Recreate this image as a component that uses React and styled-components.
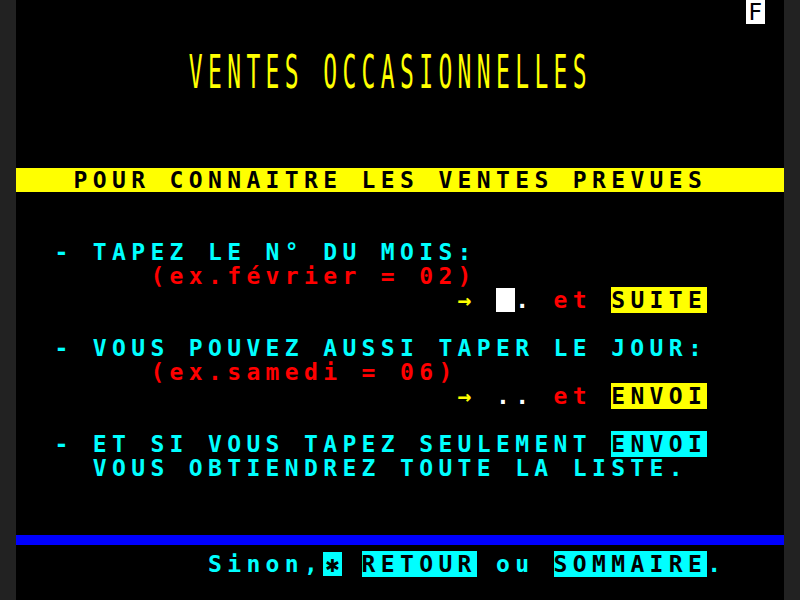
import React from "react";
import styled, { createGlobalStyle } from "styled-components";

const CELL = 19.2;
const ROW = 24;

const YELLOW = "#ffff00";
const CYAN = "#00ffff";
const RED = "#ff0000";
const WHITE = "#ffffff";
const BLUE = "#0000ff";

const GlobalStyle = createGlobalStyle`
  html, body {
    margin: 0;
    padding: 0;
    background: #222222;
  }
`;

const Screen = styled.div`
  width: ${CELL * 40}px;
  height: ${ROW * 25}px;
  margin: 0 auto;
  background: #000000;
  overflow: hidden;
  font-family: "DejaVu Sans Mono", "Liberation Mono", monospace;
  font-size: 23px;
  font-weight: bold;
  letter-spacing: ${CELL - 23 * 0.6021}px;
`;

const Row = styled.div`
  height: ${ROW}px;
  line-height: ${ROW}px;
  white-space: pre;
  background: ${(p) => p.$band || "transparent"};
`;

const Gap = styled.div`
  height: ${(p) => p.$rows * ROW}px;
`;

const DoubleRow = styled.div`
  height: ${ROW * 2}px;
  padding-top: ${ROW}px;
  box-sizing: border-box;
  line-height: ${ROW}px;
  white-space: pre;
`;

const Tall = styled.span`
  display: inline-block;
  transform: scaleY(2);
  transform-origin: bottom;
  font-weight: normal;
  color: ${(p) => p.$fg};
`;

const Txt = styled.span`
  color: ${(p) => p.$fg || CYAN};
  background: ${(p) => p.$bg || "transparent"};
`;

const Cell = styled.span`
  display: inline-block;
  width: ${CELL}px;
  height: ${ROW}px;
  vertical-align: top;
  text-align: center;
  letter-spacing: 0;
  color: ${(p) => p.$fg || "#000"};
  background: ${(p) => p.$bg || "transparent"};
`;

const StatusF = styled(Cell)`
  font-weight: normal;
`;

const Divider = styled.div`
  height: ${ROW}px;
  padding-top: 7px;
  box-sizing: border-box;
`;

const BlueBar = styled.div`
  height: 10px;
  background: ${BLUE};
`;

const sp = (n) => " ".repeat(n);

export default function App() {
  return (
    <>
      <GlobalStyle />
      <Screen>
        <Row>
          {sp(38)}
          <StatusF $bg={WHITE}>F</StatusF>
        </Row>
        <Gap $rows={1} />
        <DoubleRow>
          {sp(9)}
          <Tall $fg={YELLOW}>VENTES OCCASIONNELLES</Tall>
        </DoubleRow>
        <Gap $rows={3} />
        <Row $band={YELLOW}>
          <Txt $fg="#000">{sp(3)}POUR CONNAITRE LES VENTES PREVUES</Txt>
        </Row>
        <Gap $rows={2} />
        <Row>
          <Txt>{sp(2)}- TAPEZ LE N° DU MOIS:</Txt>
        </Row>
        <Row>
          <Txt $fg={RED}>{sp(7)}(ex.février = 02)</Txt>
        </Row>
        <Row>
          {sp(23)}
          <Txt $fg={YELLOW}>→ </Txt>
          <Cell $bg={WHITE} />
          <Txt $fg={WHITE}>. </Txt>
          <Txt $fg={RED}>et </Txt>
          <Txt $fg="#000" $bg={YELLOW}>SUITE</Txt>
        </Row>
        <Gap $rows={1} />
        <Row>
          <Txt>{sp(2)}- VOUS POUVEZ AUSSI TAPER LE JOUR:</Txt>
        </Row>
        <Row>
          <Txt $fg={RED}>{sp(7)}(ex.samedi = 06)</Txt>
        </Row>
        <Row>
          {sp(23)}
          <Txt $fg={YELLOW}>→ </Txt>
          <Txt $fg={WHITE}>.. </Txt>
          <Txt $fg={RED}>et </Txt>
          <Txt $fg="#000" $bg={YELLOW}>ENVOI</Txt>
        </Row>
        <Gap $rows={1} />
        <Row>
          <Txt>{sp(2)}- ET SI VOUS TAPEZ SEULEMENT </Txt>
          <Txt $fg="#000" $bg={CYAN}>ENVOI</Txt>
        </Row>
        <Row>
          <Txt>{sp(4)}VOUS OBTIENDREZ TOUTE LA LISTE.</Txt>
        </Row>
        <Gap $rows={2} />
        <Divider>
          <BlueBar />
        </Divider>
        <Row>
          <Txt>{sp(10)}Sinon,</Txt>
          <Cell $bg={CYAN}>✱</Cell>
          <Txt> </Txt>
          <Txt $fg="#000" $bg={CYAN}>RETOUR</Txt>
          <Txt> ou </Txt>
          <Txt $fg="#000" $bg={CYAN}>SOMMAIRE</Txt>
          <Txt>.</Txt>
        </Row>
      </Screen>
    </>
  );
}
